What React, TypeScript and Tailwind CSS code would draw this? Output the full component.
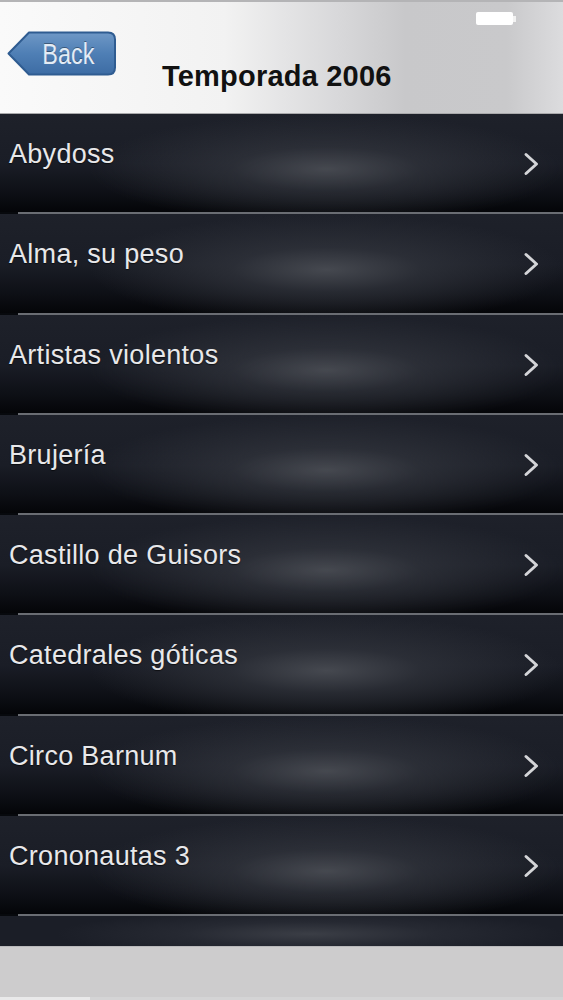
import React from 'react'

const episodes = [
  'Abydoss',
  'Alma, su peso',
  'Artistas violentos',
  'Brujería',
  'Castillo de Guisors',
  'Catedrales góticas',
  'Circo Barnum',
  'Crononautas 3',
]

function BackButton() {
  return (
    <div className="relative w-[110px] h-[47px]">
      <svg className="absolute inset-0" width="110" height="47" viewBox="0 0 110 47">
        <defs>
          <linearGradient id="backFill" x1="0" y1="0" x2="0" y2="1">
            <stop offset="0" stopColor="#6f98c6" />
            <stop offset="0.5" stopColor="#4f7fb5" />
            <stop offset="1" stopColor="#3d6ca4" />
          </linearGradient>
        </defs>
        <path
          d="M1.5 23.5 L22 2.5 L101 2.5 Q108 2.5 108 9.5 L108 37.5 Q108 44.5 101 44.5 L22 44.5 Z"
          fill="url(#backFill)"
          stroke="#2f5c91"
          strokeWidth="2"
          strokeLinejoin="round"
        />
      </svg>
      <div className="relative h-full flex items-center justify-center pl-[12px]">
        <span className="inline-block scale-x-[0.78] text-[30px] leading-none text-[#e4ecf5] font-['Liberation_Sans',Arial,sans-serif] [text-shadow:0_-1px_0_rgba(0,0,0,0.35)]">
          Back
        </span>
      </div>
    </div>
  )
}

function Chevron() {
  return (
    <svg width="17" height="24" viewBox="0 0 17 24" className="mt-[38px] mr-[23px] shrink-0">
      <polyline
        points="3,2.5 13.5,12 3,21.5"
        fill="none"
        stroke="#d4d5d8"
        strokeWidth="3"
        strokeLinecap="round"
        strokeLinejoin="round"
      />
    </svg>
  )
}

function Row({ title }: { title: string }) {
  return (
    <div className="h-[100.3px] shrink-0 flex flex-col bg-[radial-gradient(ellipse_42%_55%_at_58%_55%,rgba(72,75,82,0.95)_0%,rgba(50,53,61,0.7)_40%,rgba(30,33,41,0)_100%),linear-gradient(to_bottom,#1e212a_0%,#1a1d26_50%,#0d0f15_80%,#040508_98%)]">
      <div className="flex-1 flex items-start justify-between">
        <span className="pt-[27px] pl-[9px] text-[27px] leading-none tracking-[0.3px] text-[#e8e8ea] font-['Liberation_Sans',Arial,sans-serif] [text-shadow:0_1px_1px_rgba(0,0,0,0.6)]">
          {title}
        </span>
        <Chevron />
      </div>
      <div className="h-[2px] flex">
        <div className="w-[18px] bg-[#07090d]" />
        <div className="flex-1 bg-[#6a6d73]" />
      </div>
    </div>
  )
}

export default function App() {
  return (
    <div className="h-screen w-full flex flex-col overflow-hidden font-['Liberation_Sans',Arial,sans-serif]">
      <header className="h-[114px] shrink-0 flex flex-col border-t-2 border-[#b4b4b6] border-b border-b-[#a9a9ab] bg-[linear-gradient(to_right,#fafafa_0%,#f2f2f2_40%,#d8d8da_60%,#c8c8ca_72%,#c9c9cb_90%,#dcdcde_100%)]">
        <div className="h-[26px] flex justify-end items-start pt-[10px] pr-[47px]">
          <div className="flex items-center">
            <div className="w-[37px] h-[13px] rounded-[2px] bg-white" />
            <div className="w-[3px] h-[6px] bg-[#f2f2f2]" />
          </div>
        </div>
        <div className="flex items-start">
          <div className="ml-[7px] mt-[2px]">
            <BackButton />
          </div>
          <h1 className="ml-[45px] mt-[34px] text-[29px] leading-none font-bold text-[#111] tracking-[0.2px]">
            Temporada 2006
          </h1>
        </div>
      </header>

      <div className="flex flex-col">
        {episodes.map((ep) => (
          <Row key={ep} title={ep} />
        ))}
      </div>

      <div className="h-[29.6px] shrink-0 bg-[radial-gradient(ellipse_45%_80%_at_55%_60%,#3b3e46_0%,#262932_50%,#1b1e27_100%)]" />

      <div className="flex-1 flex flex-col justify-end bg-[#cdcccd] border-t border-[#b9b9bb]">
        <div className="h-[3px] flex">
          <div className="w-[90px] bg-[#e9e9ea]" />
          <div className="flex-1 bg-[#d4d4d5]" />
        </div>
      </div>
    </div>
  )
}
